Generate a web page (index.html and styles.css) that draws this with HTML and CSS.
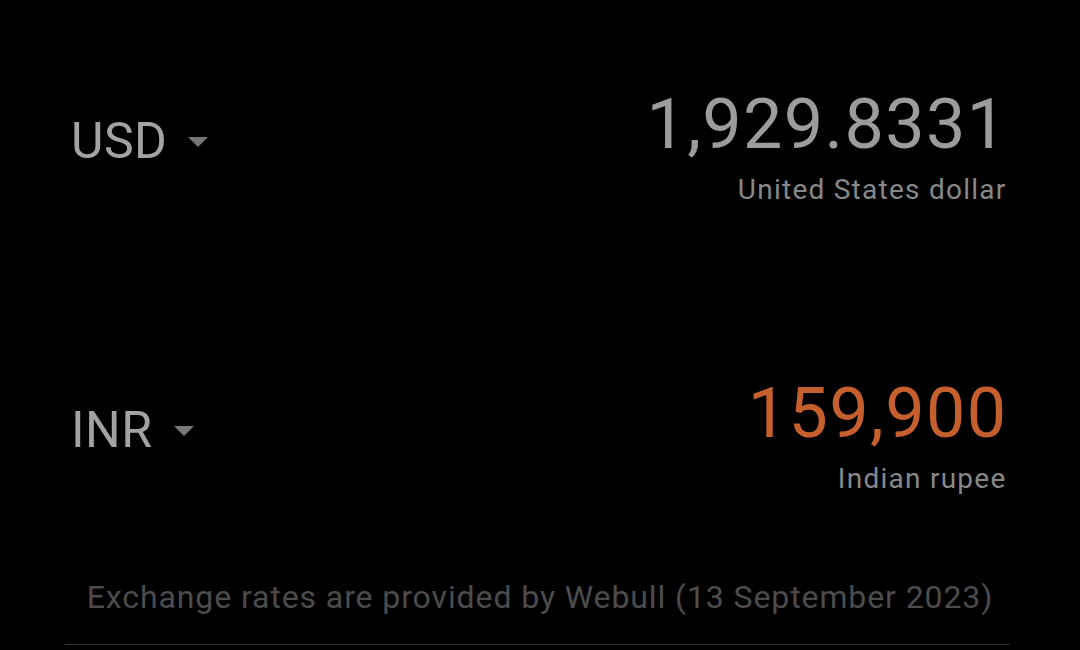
FILE: index.html
```html
<!DOCTYPE html>
<html>
<head>
<meta charset="utf-8">
<link rel="stylesheet" href="styles.css">
</head>
<body>
<div class="screen">
  <div class="row row-first">
    <div class="code">USD<span class="caret"></span></div>
    <div class="value">
      <div class="amount">1,929.8331</div>
      <div class="name">United States dollar</div>
    </div>
  </div>
  <div class="row row-second">
    <div class="code">INR<span class="caret"></span></div>
    <div class="value">
      <div class="amount amount-active">159,900</div>
      <div class="name">Indian rupee</div>
    </div>
  </div>
  <div class="footer">Exchange rates are provided by Webull (13 September 2023)</div>
  <div class="divider"></div>
</div>
</body>
</html>
```
FILE: styles.css
```css
html, body {
  margin: 0;
  padding: 0;
  background: #000;
}
body {
  width: 1080px;
  height: 650px;
  overflow: hidden;
  font-family: Roboto, "Noto Sans", sans-serif;
}
.screen {
  display: flex;
  flex-direction: column;
  padding-top: 84px;
}
.row {
  display: flex;
  justify-content: space-between;
  align-items: flex-start;
  padding: 0 74px 0 71px;
}
.row-first {
  height: 289px;
}
.row-second {
  height: 205px;
}
.code {
  display: flex;
  align-items: center;
  margin-top: 29px;
  font-size: 50px;
  line-height: 56px;
  letter-spacing: 0.5px;
  color: #a3a3a3;
}
.caret {
  width: 0;
  height: 0;
  margin-left: 21px;
  margin-top: 1px;
  border-left: 10px solid transparent;
  border-right: 10px solid transparent;
  border-top: 10px solid #777;
}
.value {
  display: flex;
  flex-direction: column;
  align-items: flex-end;
}
.amount {
  font-size: 70px;
  line-height: 80px;
  letter-spacing: 1.4px;
  margin-right: -1.4px;
  color: #9c9c9c;
}
.amount-active {
  color: #c65f2e;
}
.name {
  margin-top: 9px;
  font-size: 28px;
  line-height: 34px;
  letter-spacing: 1.25px;
  margin-right: -0.5px;
  color: #888;
}
.footer {
  text-align: center;
  font-size: 32px;
  line-height: 38px;
  letter-spacing: 0.9px;
  color: #4c4c4c;
}
.divider {
  margin: 28px 70px 0 65px;
  height: 1px;
  background: #2e2e2e;
}
```
